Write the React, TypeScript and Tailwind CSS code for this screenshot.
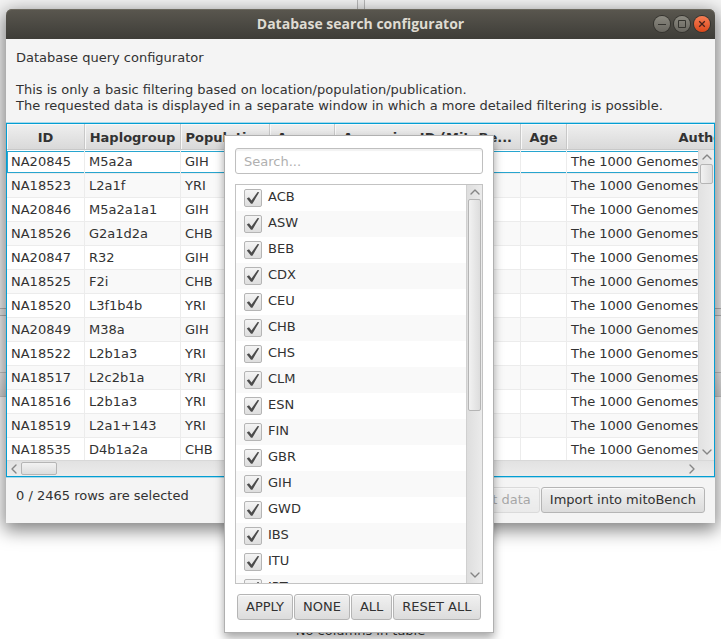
import type { ReactNode } from "react";
import { ChevronDown, ChevronLeft, ChevronRight, ChevronUp } from "lucide-react";

const columns = [
  { title: "ID", width: "w-[78px]" },
  { title: "Haplogroup", width: "w-[96px]" },
  { title: "Population", width: "w-[89px]" },
  { title: "Access", width: "w-[65px]" },
  { title: "Accession ID (MitoBe...", width: "w-[186px]" },
  { title: "Age", width: "w-[46px]" },
  { title: "Authors", width: "w-[282px]" },
];

const rows = [
  ["NA20845", "M5a2a", "GIH"],
  ["NA18523", "L2a1f", "YRI"],
  ["NA20846", "M5a2a1a1", "GIH"],
  ["NA18526", "G2a1d2a", "CHB"],
  ["NA20847", "R32", "GIH"],
  ["NA18525", "F2i", "CHB"],
  ["NA18520", "L3f1b4b", "YRI"],
  ["NA20849", "M38a", "GIH"],
  ["NA18522", "L2b1a3", "YRI"],
  ["NA18517", "L2c2b1a", "YRI"],
  ["NA18516", "L2b1a3", "YRI"],
  ["NA18519", "L2a1+143", "YRI"],
  ["NA18535", "D4b1a2a", "CHB"],
];

const populations = [
  "ACB", "ASW", "BEB", "CDX", "CEU", "CHB", "CHS", "CLM",
  "ESN", "FIN", "GBR", "GIH", "GWD", "IBS", "ITU", "JPT",
];

function PushButton({ children, disabled = false }: { children: ReactNode; disabled?: boolean }) {
  return (
    <button
      type="button"
      disabled={disabled}
      className="h-[26px] shrink-0 whitespace-nowrap rounded-[3px] border border-[#b5b5b5] bg-linear-to-b from-[#f1f1f1] to-[#dcdcdc] px-2 leading-4 shadow-[inset_0_1px_0_#fbfbfb] disabled:opacity-40"
    >
      {children}
    </button>
  );
}

function FilterPopup() {
  return (
    <div
      role="dialog"
      aria-label="Filter population"
      className="absolute left-[224px] top-[135px] z-10 w-[270px] border border-[#b0b0b0] bg-white px-[10px] pb-3 pt-3 shadow-[0_5px_9px_rgba(0,0,0,0.35)]"
    >
      <input
        type="text"
        aria-label="Search"
        placeholder="Search..."
        className="block h-[26px] w-full rounded-[3px] border border-[#bfbfbf] bg-white px-2 shadow-[inset_0_2px_1px_#f2f2f2] outline-none placeholder:text-[#b0b0b0]"
      />
      <div className="mt-[10px] flex h-[400px] border border-[#c3c3c3]">
        <ul className="min-w-0 flex-1 overflow-hidden">
          {populations.map((name) => (
            <li key={name} className="odd:bg-white even:bg-[#f9f9f9]">
              <label className="flex h-[26px] items-center gap-[6px] pl-2">
                <span className="grid size-[18px] place-items-center">
                  <input
                    type="checkbox"
                    defaultChecked
                    className="col-start-1 row-start-1 size-[18px] appearance-none rounded-[2px] border border-[#b5b5b5] bg-linear-to-b from-[#f4f4f4] to-[#dedede]"
                  />
                  <svg viewBox="0 0 18 18" className="pointer-events-none col-start-1 row-start-1 size-[18px]">
                    <path d="M2.8 9.4 5 8.2 7.5 11.6 13.6 2.9 15.2 3.2 8.4 14.8H7Z" fill="#4c4c4c" />
                  </svg>
                </span>
                <span className="pb-[2px]">{name}</span>
              </label>
            </li>
          ))}
        </ul>
        <div className="flex w-4 flex-col items-center border-l border-[#d0d0d0] bg-linear-to-r from-[#dedede] to-[#ebebeb] text-[#858585]">
          <ChevronUp size={16} strokeWidth={2} className="-my-px shrink-0" />
          <div className="h-[212px] w-[13px] rounded-[2px] border border-[#b5b5b5] bg-linear-to-r from-[#f2f2f2] to-[#dddddd]" />
          <ChevronDown size={16} strokeWidth={2} className="mt-auto shrink-0" />
        </div>
      </div>
      <div className="mt-[10px] flex gap-px pl-[2px]">
        <PushButton>APPLY</PushButton>
        <PushButton>NONE</PushButton>
        <PushButton>ALL</PushButton>
        <PushButton>RESET ALL</PushButton>
      </div>
    </div>
  );
}

function TitleBar() {
  return (
    <header className="grid h-[30px] grid-cols-[1fr_auto_1fr] items-center rounded-t-[6px] bg-linear-to-b from-[#5a574f] to-[#3e3d38] px-[5px] shadow-[inset_0_1px_0_#6c695f]">
      <h1 className="col-start-2 font-['Open_Sans',sans-serif] text-[14px] font-bold text-[#dfdbd2]">
        Database search configurator
      </h1>
      <div className="flex justify-end gap-1">
        <button type="button" aria-label="Minimize" className="size-4 rounded-full bg-linear-to-b from-[#8b8980] to-[#696760] ring-1 ring-[#34332e]">
          <svg viewBox="0 0 16 16" className="size-4" stroke="#35342f" fill="none"><path d="M4 8.5h8" /></svg>
        </button>
        <button type="button" aria-label="Maximize" className="size-4 rounded-full bg-linear-to-b from-[#8b8980] to-[#696760] ring-1 ring-[#34332e]">
          <svg viewBox="0 0 16 16" className="size-4" stroke="#35342f" fill="none"><path d="M4.5 4.5h7v7h-7z" /></svg>
        </button>
        <button type="button" aria-label="Close" className="size-4 rounded-full bg-linear-to-b from-[#f57d53] to-[#dc4717] ring-1 ring-[#34332e]">
          <svg viewBox="0 0 16 16" className="size-4" stroke="#45221a" strokeWidth="1.3" fill="none"><path d="m5.2 5.2 5.6 5.6m0-5.6-5.6 5.6" /></svg>
        </button>
      </div>
    </header>
  );
}

function ResultTable() {
  return (
    <div className="relative border border-[#039ed3] shadow-[0_-1px_0_#a9d9ea,0_1px_0_#a9d9ea]">
      <div className="h-[336px] overflow-hidden bg-white">
        <table className="w-[842px] table-fixed border-separate border-spacing-0">
          <thead>
            <tr className="h-[26px]">
              {columns.map((c) => (
                <th
                  key={c.title}
                  scope="col"
                  className={`${c.width} whitespace-nowrap border-b border-r border-[#c8c8c8] bg-linear-to-b from-[#efefef] to-[#d9d9d9] px-0 pb-0 pt-[2px] text-center font-bold leading-4 shadow-[inset_1px_1px_0_#f8f8f8]`}
                >
                  {c.title}
                </th>
              ))}
            </tr>
          </thead>
          <tbody className="[&_td]:h-6 [&_td]:border-b [&_td]:border-r [&_td]:border-[#ececec] [&_td]:py-0 [&_td]:pl-1 [&_td]:pr-0 [&_td]:leading-4">
            {rows.map((r, i) => (
              <tr
                key={r[0]}
                className={
                  i === 0
                    ? "bg-white [&_td]:shadow-[inset_0_1px_0_#ffffff,inset_0_2px_0_#27a5cf,inset_0_-1px_0_#27a5cf] [&_td:first-child]:shadow-[inset_0_1px_0_#ffffff,inset_1px_2px_0_#27a5cf,inset_0_-1px_0_#27a5cf]"
                    : "odd:bg-white even:bg-[#f9f9f9]"
                }
              >
                <td>{r[0]}</td>
                <td>{r[1]}</td>
                <td>{r[2]}</td>
                <td />
                <td />
                <td />
                <td className="whitespace-nowrap">The 1000 Genomes Project Consortium</td>
              </tr>
            ))}
          </tbody>
        </table>
      </div>
      <div className="absolute bottom-4 right-0 top-[26px] flex w-4 flex-col items-center border-l border-[#d8d8d8] bg-linear-to-r from-[#e2e2e2] to-[#ececec] text-[#858585]">
        <ChevronUp size={16} strokeWidth={2} className="-my-px shrink-0" />
        <div className="h-5 w-[13px] rounded-[2px] border border-[#b5b5b5] bg-linear-to-r from-[#f2f2f2] to-[#dddddd]" />
        <ChevronDown size={16} strokeWidth={2} className="mt-auto shrink-0" />
      </div>
      <div className="flex h-4 items-center border-t border-[#d8d8d8] bg-linear-to-b from-[#e2e2e2] to-[#ececec] pr-[14px] text-[#858585]">
        <ChevronLeft size={16} strokeWidth={2} className="-mx-px shrink-0" />
        <div className="h-[13px] w-9 rounded-[2px] border border-[#b5b5b5] bg-linear-to-b from-[#f2f2f2] to-[#dddddd]" />
        <ChevronRight size={16} strokeWidth={2} className="ml-auto shrink-0" />
      </div>
    </div>
  );
}

export default function App() {
  return (
    <div className="relative min-h-screen overflow-hidden bg-white font-['DejaVu_Sans',sans-serif] text-[13px] leading-4 text-[#323232]">
      <div aria-hidden="true" className="absolute inset-x-0 top-0 flex h-[397px] flex-col">
        <div className="flex h-[308px] justify-center bg-[#f4f4f4]">
          <div className="w-2 border-x border-[#b8b8b8] bg-[#eeeeee]" />
        </div>
        <div className="h-2 border-y border-[#b8b8b8] bg-[#ededed]" />
        <div className="flex-1 bg-[#f4f4f4]" />
        <div className="h-[25px] border-y border-[#c8c8c8] bg-linear-to-b from-[#efefef] to-[#d9d9d9]" />
      </div>
      <p className="absolute inset-x-0 top-[623px] text-center">No columns in table</p>

      <div className="px-[6px] pt-[9px]">
        <main className="relative rounded-t-[6px] bg-[#f4f4f4] shadow-[0_5px_18px_2px_rgba(0,0,0,0.5)]">
          <TitleBar />
          <div className="px-[10px] pb-[9px] pt-[11px]">
            <h2>Database query configurator</h2>
            <p className="mt-4">
              This is only a basic filtering based on location/population/publication.
              <br />
              The requested data is displayed in a separate window in which a more detailed filtering is possible.
            </p>
          </div>
          <ResultTable />
          <footer className="flex items-start justify-between px-[10px] py-[10px]">
            <p className="pt-px">0 / 2465 rows are selected</p>
            <div className="flex gap-px">
              <PushButton disabled>Get data</PushButton>
              <PushButton>Import into mitoBench</PushButton>
            </div>
          </footer>
        </main>
      </div>
      <FilterPopup />
    </div>
  );
}
